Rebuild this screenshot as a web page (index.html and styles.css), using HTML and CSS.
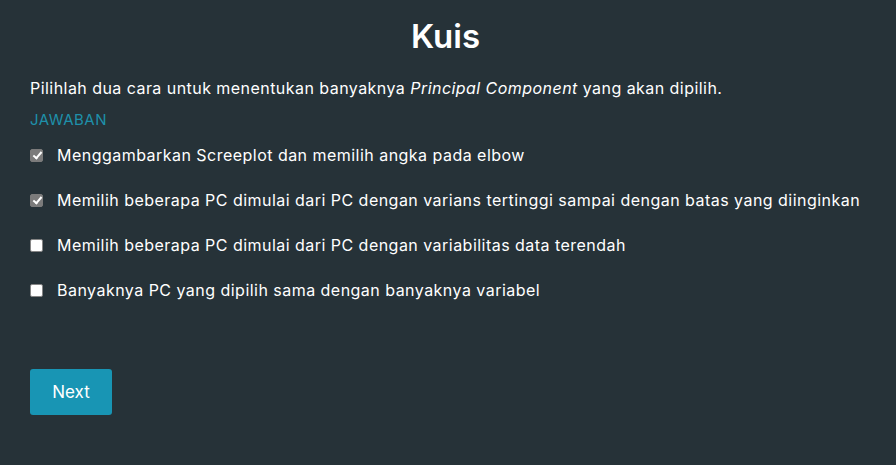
FILE: index.html
```html
<!DOCTYPE html>
<html lang="id">
<head>
<meta charset="utf-8">
<link rel="stylesheet" href="styles.css">
</head>
<body>
<main class="quiz">
  <h1 class="title">Kuis</h1>
  <p class="question">Pilihlah dua cara untuk menentukan banyaknya <em>Principal Component</em> yang akan dipilih.</p>
  <div class="label">JAWABAN</div>
  <ul class="options">
    <li class="option"><span class="box checked"></span><span>Menggambarkan Screeplot dan memilih angka pada elbow</span></li>
    <li class="option"><span class="box checked"></span><span>Memilih beberapa PC dimulai dari PC dengan varians tertinggi sampai dengan batas yang diinginkan</span></li>
    <li class="option"><span class="box"></span><span>Memilih beberapa PC dimulai dari PC dengan variabilitas data terendah</span></li>
    <li class="option"><span class="box"></span><span>Banyaknya PC yang dipilih sama dengan banyaknya variabel</span></li>
  </ul>
  <button class="next">Next</button>
</main>
</body>
</html>
```
FILE: styles.css
```css
html, body {
  margin: 0;
  padding: 0;
  background: #263238;
  height: 100%;
}
body {
  font-family: "Inter", "Open Sans", sans-serif;
  color: #ffffff;
}
.quiz {
  padding: 14px 30px 0 30px;
  display: flex;
  flex-direction: column;
}
.title {
  margin: 0 0 0 -5px;
  text-align: center;
  font-size: 33px;
  font-weight: 600;
  line-height: 44px;
}
.question {
  margin: 18px 0 0 0;
  font-size: 16px;
  line-height: 24px;
  letter-spacing: 0.45px;
}
.label {
  margin-top: 10px;
  font-size: 15px;
  line-height: 20px;
  letter-spacing: 0.5px;
  color: #1e90aa;
}
.options {
  list-style: none;
  margin: 13px 0 0 0;
  padding: 0;
  display: flex;
  flex-direction: column;
  gap: 21px;
}
.option {
  display: flex;
  align-items: center;
  gap: 14px;
  font-size: 16px;
  line-height: 24px;
  letter-spacing: 0.47px;
}
.box {
  width: 13px;
  height: 13px;
  box-sizing: border-box;
  border-radius: 2px;
  background: #ffffff;
  border: 1px solid #858585;
  flex: none;
  position: relative;
}
.box.checked {
  background: #7b7b7b;
  border-color: #7b7b7b;
}
.box.checked::after {
  content: "";
  position: absolute;
  left: 3.5px;
  top: 0.5px;
  width: 3px;
  height: 7px;
  border: solid #fff;
  border-width: 0 2px 2px 0;
  transform: rotate(40deg);
}
.next {
  margin-top: 67px;
  align-self: flex-start;
  width: 82px;
  height: 46px;
  border: none;
  border-radius: 3px;
  background: #1895b4;
  color: #fff;
  font-family: "Inter", sans-serif;
  font-size: 17px;
}
```
